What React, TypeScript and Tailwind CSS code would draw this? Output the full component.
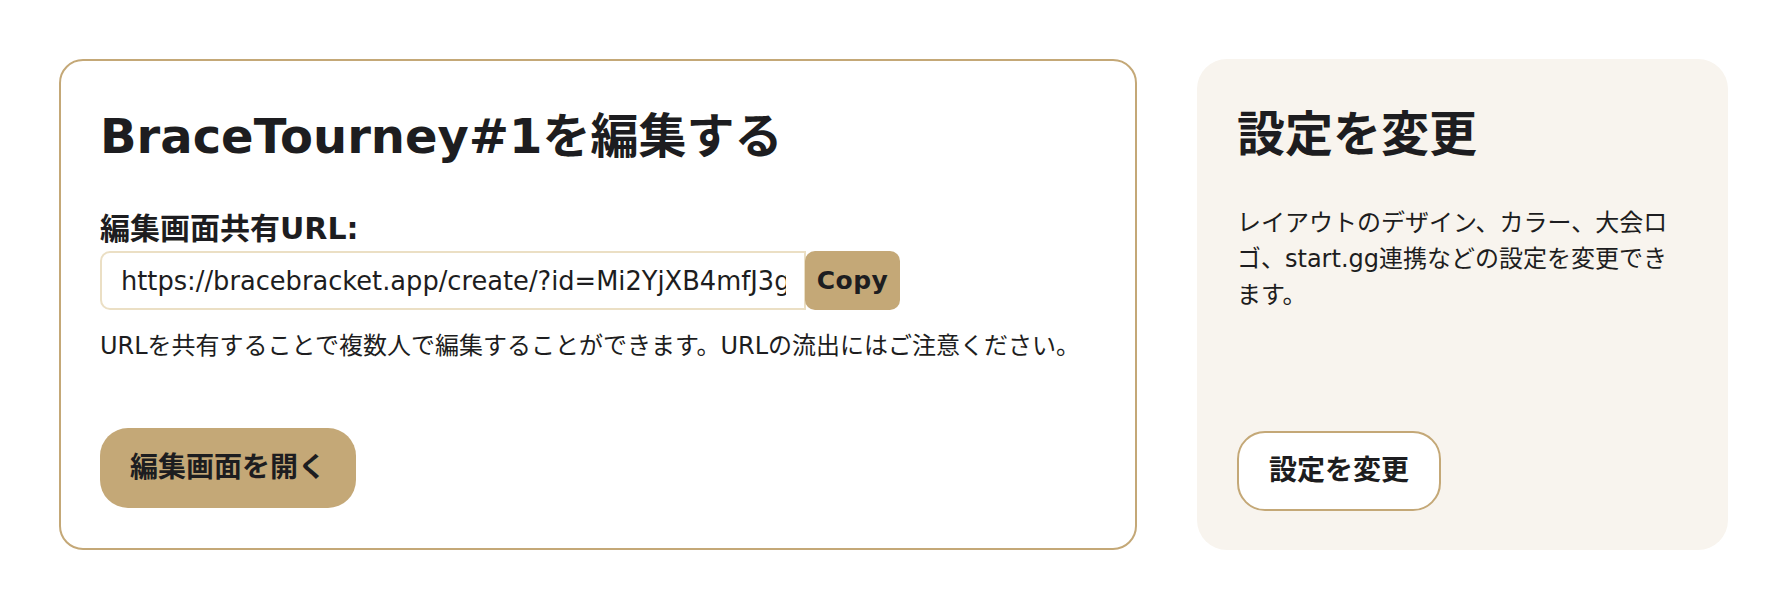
import React from "react";

export default function App() {
  return (
    <div className="min-h-[608px] w-[1790px] bg-white pl-[59px] pt-[59px] flex gap-[60px] font-['DejaVu_Sans','Noto_Sans_CJK_JP',sans-serif] text-[#1d1d20]">
      <div className="w-[1078px] h-[491px] border-2 border-[#c4a877] rounded-[24px] px-[39px] pt-[39px] pb-[40px] flex flex-col">
        <h1 className="text-[48px] font-bold leading-[72px]">
          BraceTourney#1を編集する
        </h1>
        <p className="mt-[34px] text-[30px] font-bold leading-[45px]">編集画面共有URL:</p>
        <div className="flex items-stretch">
          <input
            readOnly
            value="https://bracebracket.app/create/?id=Mi2YjXB4mfJ3glQ2"
            className="w-[706px] h-[59px] border-2 border-[#ebdfc4] rounded-l-[10px] pl-[19px] pr-[18px] text-[25.7px] outline-none bg-white text-[#1d1d20] font-['DejaVu_Sans',sans-serif]"
          />
          <button className="-ml-[1px] w-[95px] h-[59px] bg-[#c4a877] rounded-[10px] text-[25px] font-bold text-[#1d1d20] tracking-[0.5px]">
            Copy
          </button>
        </div>
        <p className="mt-[18px] text-[24px] leading-[36px]">
          URLを共有することで複数人で編集することができます。URLの流出にはご注意ください。
        </p>
        <button className="mt-auto self-start h-[80px] px-[30px] rounded-[28px] bg-[#c4a877] text-[28px] font-bold text-[#1d1d20]">
          編集画面を開く
        </button>
      </div>
      <div className="w-[531px] h-[491px] rounded-[30px] bg-[#f8f4ee] px-[40px] pt-[39px] pb-[39px] flex flex-col">
        <h2 className="text-[48px] font-bold leading-[72px]">設定を変更</h2>
        <p className="mt-[35px] text-[24px] leading-[36px]">
          レイアウトのデザイン、カラー、大会ロゴ、start.gg連携などの設定を変更できます。
        </p>
        <button className="mt-auto self-start h-[80px] px-[30px] rounded-[28px] bg-white border-2 border-[#c4a877] text-[28px] font-bold text-[#1d1d20]">
          設定を変更
        </button>
      </div>
    </div>
  );
}
